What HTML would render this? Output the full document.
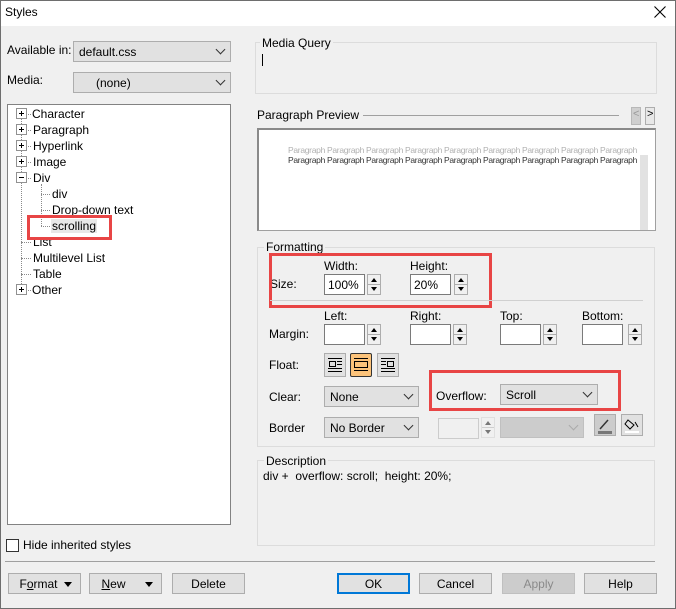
<!DOCTYPE html>
<html><head><meta charset="utf-8"><style>
*{box-sizing:border-box;margin:0;padding:0}
body{width:676px;height:609px;overflow:hidden;background:#f0f0f0;font-family:"Liberation Sans",sans-serif;font-size:12px;color:#000;position:relative}
.a{position:absolute;white-space:nowrap}
.win{position:absolute;left:0;top:0;width:676px;height:609px;border:1px solid #6e6e6e}
.title{position:absolute;left:1px;top:1px;width:674px;height:25px;background:#fff}
.combo{position:absolute;background:#e1e1e1;border:1px solid #adadad;height:21px;padding:3px 0 0 5px}
.combo .ch{position:absolute;right:6px;top:4px;width:7px;height:7px;border-right:1px solid #333;border-bottom:1px solid #333;transform:rotate(45deg)}
.inp{position:absolute;background:#fff;border:1px solid #7a7a7a;height:21px;padding:3px 0 0 3px}
.spin{position:absolute;width:14px;height:21px;border:1px solid #adadad;background:#f0f0f0}
.spin:before{content:"";position:absolute;left:3px;top:3px;border-left:3px solid transparent;border-right:3px solid transparent;border-bottom:4px solid #000}
.spin:after{content:"";position:absolute;left:3px;top:12px;border-left:3px solid transparent;border-right:3px solid transparent;border-top:4px solid #000}
.spin i{position:absolute;left:0;right:0;top:9px;border-top:1px solid #adadad}
.grp{position:absolute;border:1px solid #dcdcdc}
.glab{position:absolute;background:#f0f0f0;padding:0 2px}
.btn{position:absolute;height:21px;background:#e1e1e1;border:1px solid #adadad;text-align:center;padding-top:3px}
.red{position:absolute;border:3px solid #e84545}
.pb{position:absolute;width:11px;height:11px;border:1px solid #919191;background:#fff}
.pb:before{content:"";position:absolute;left:2px;top:4px;width:5px;height:1px;background:#000}
.pb.p:after{content:"";position:absolute;left:4px;top:2px;width:1px;height:5px;background:#000}
.dot{position:absolute;border-top:1px dotted #8a8a8a}
.vdot{position:absolute;border-left:1px dotted #8a8a8a}
.fb{position:absolute;width:22px;height:24px;border:1px solid #adadad;background:#e1e1e1}
.pv span{display:inline-block;width:39px;font-size:8.5px;letter-spacing:-0.3px}
</style></head><body>
<div class="win"></div>
<div class="title"></div>
<div class="a" style="left:5px;top:5px">Styles</div>
<svg class="a" style="left:654px;top:6px" width="12" height="12"><path d="M0.5 0.5L11.5 11.5M11.5 0.5L0.5 11.5" stroke="#000" stroke-width="1.1"/></svg>

<div class="a" style="left:7px;top:43px">Available in:</div>
<div class="combo" style="left:73px;top:41px;width:158px">default.css<div class="ch"></div></div>
<div class="a" style="left:7px;top:73px">Media:</div>
<div class="combo" style="left:73px;top:72px;width:158px;padding-left:22px">(none)<div class="ch"></div></div>

<div class="a" style="left:7px;top:104px;width:224px;height:421px;background:#fff;border:1px solid #828282"></div>
<div class="vdot" style="left:21px;top:114px;height:176px"></div>
<div class="vdot" style="left:41px;top:184px;height:42px"></div>
<div class="dot" style="left:21px;top:242px;width:10px"></div>
<div class="dot" style="left:21px;top:258px;width:10px"></div>
<div class="dot" style="left:21px;top:274px;width:10px"></div>
<div class="dot" style="left:41px;top:194px;width:9px"></div>
<div class="dot" style="left:41px;top:210px;width:9px"></div>
<div class="dot" style="left:41px;top:226px;width:9px"></div>
<div class="pb p" style="left:16px;top:108px"></div><div class="dot" style="left:28px;top:114px;width:3px"></div>
<div class="pb p" style="left:16px;top:124px"></div><div class="dot" style="left:28px;top:130px;width:3px"></div>
<div class="pb p" style="left:16px;top:140px"></div><div class="dot" style="left:28px;top:146px;width:3px"></div>
<div class="pb p" style="left:16px;top:156px"></div><div class="dot" style="left:28px;top:162px;width:3px"></div>
<div class="pb" style="left:16px;top:172px"></div><div class="dot" style="left:28px;top:178px;width:3px"></div>
<div class="pb p" style="left:16px;top:284px"></div><div class="dot" style="left:28px;top:290px;width:3px"></div>
<div class="a" style="left:32px;top:107px">Character</div>
<div class="a" style="left:33px;top:123px">Paragraph</div>
<div class="a" style="left:33px;top:139px">Hyperlink</div>
<div class="a" style="left:33px;top:155px">Image</div>
<div class="a" style="left:33px;top:171px">Div</div>
<div class="a" style="left:52px;top:187px">div</div>
<div class="a" style="left:52px;top:203px">Drop-down text</div>
<div class="a" style="left:51px;top:219px;background:#e8e8e8;padding:0 1px">scrolling</div>
<div class="a" style="left:33px;top:235px">List</div>
<div class="a" style="left:33px;top:251px">Multilevel List</div>
<div class="a" style="left:33px;top:267px">Table</div>
<div class="a" style="left:32px;top:283px">Other</div>
<div class="red" style="left:27px;top:215px;width:85px;height:25px"></div>

<div class="a" style="left:6px;top:539px;width:13px;height:13px;border:1px solid #333;background:#fff"></div>
<div class="a" style="left:23px;top:538px">Hide inherited styles</div>

<!-- Media query -->
<div class="grp" style="left:255px;top:42px;width:402px;height:52px"></div>
<div class="glab" style="left:260px;top:36px">Media Query</div>
<div class="a" style="left:262px;top:54px;width:1px;height:12px;background:#000"></div>

<!-- Preview -->
<div class="a" style="left:257px;top:108px">Paragraph Preview</div>
<div class="a" style="left:363px;top:115px;width:256px;height:1px;background:#a0a0a0"></div>
<div class="a" style="left:631px;top:107px;width:10px;height:18px;background:#cfcfcf;border:1px solid #b8b8b8;color:#999;font-size:11px;padding-left:1px">&lt;</div>
<div class="a" style="left:645px;top:107px;width:10px;height:18px;background:#e8e8e8;border:1px solid #adadad;font-size:11px;padding-left:1px">&gt;</div>
<div class="a" style="left:257px;top:128px;width:399px;height:103px;background:#fff;border:1px solid #a0a0a0;border-top:2px solid #8a8a8a;border-left:2px solid #8a8a8a"></div>
<div class="a" style="left:640px;top:155px;width:8px;height:75px;background:#e2e2e2"></div>
<div class="a pv" style="left:288px;top:145px;color:#b0b0b0;line-height:9px"><span>Paragraph</span><span>Paragraph</span><span>Paragraph</span><span>Paragraph</span><span>Paragraph</span><span>Paragraph</span><span>Paragraph</span><span>Paragraph</span><span>Paragraph</span></div>
<div class="a pv" style="left:288px;top:155px;color:#333;line-height:9px"><span>Paragraph</span><span>Paragraph</span><span>Paragraph</span><span>Paragraph</span><span>Paragraph</span><span>Paragraph</span><span>Paragraph</span><span>Paragraph</span><span>Paragraph</span></div>

<!-- Formatting -->
<div class="grp" style="left:257px;top:247px;width:398px;height:200px"></div>
<div class="glab" style="left:264px;top:240px">Formatting</div>
<div class="a" style="left:270px;top:277px">Size:</div>
<div class="a" style="left:324px;top:259px">Width:</div>
<div class="inp" style="left:324px;top:274px;width:41px">100%</div>
<div class="spin" style="left:367px;top:274px"><i></i></div>
<div class="a" style="left:410px;top:259px">Height:</div>
<div class="inp" style="left:410px;top:274px;width:41px">20%</div>
<div class="spin" style="left:454px;top:274px"><i></i></div>
<div class="red" style="left:269px;top:253px;width:223px;height:55px"></div>
<div class="a" style="left:270px;top:300px;width:373px;height:1px;background:#d0d0d0"></div>

<div class="a" style="left:324px;top:309px">Left:</div>
<div class="a" style="left:410px;top:309px">Right:</div>
<div class="a" style="left:500px;top:309px">Top:</div>
<div class="a" style="left:582px;top:309px">Bottom:</div>
<div class="a" style="left:269px;top:327px">Margin:</div>
<div class="inp" style="left:324px;top:324px;width:41px"></div><div class="spin" style="left:367px;top:324px"><i></i></div>
<div class="inp" style="left:410px;top:324px;width:41px"></div><div class="spin" style="left:453px;top:324px"><i></i></div>
<div class="inp" style="left:500px;top:324px;width:41px"></div><div class="spin" style="left:543px;top:324px"><i></i></div>
<div class="inp" style="left:582px;top:324px;width:41px"></div><div class="spin" style="left:628px;top:324px"><i></i></div>

<div class="a" style="left:269px;top:358px">Float:</div>
<div class="fb" style="left:324px;top:353px"><svg width="20" height="22"><g stroke="#000" fill="none"><rect x="4.5" y="7.5" width="6" height="5"/><path d="M3 4.5h14M12 7.5h5M12 10.5h5M3 14.5h14M3 17.5h14"/></g></svg></div>
<div class="fb" style="left:350px;top:353px;background:#fcc37a;border:1px solid #333;border-radius:2px"><svg width="20" height="22"><g stroke="#000" fill="none"><rect x="3.5" y="7.5" width="13" height="6"/><path d="M3 4.5h14M3 16.5h14"/></g></svg></div>
<div class="fb" style="left:377px;top:353px"><svg width="20" height="22"><g stroke="#000" fill="none"><rect x="9.5" y="7.5" width="6" height="5"/><path d="M3 4.5h14M3 7.5h5M3 10.5h5M3 14.5h14M3 17.5h14"/></g></svg></div>

<div class="a" style="left:269px;top:390px">Clear:</div>
<div class="combo" style="left:324px;top:386px;width:95px">None<div class="ch"></div></div>
<div class="a" style="left:436px;top:389px">Overflow:</div>
<div class="combo" style="left:500px;top:384px;width:98px">Scroll<div class="ch"></div></div>
<div class="red" style="left:429px;top:370px;width:192px;height:41px"></div>

<div class="a" style="left:269px;top:421px">Border</div>
<div class="combo" style="left:324px;top:417px;width:95px">No Border<div class="ch"></div></div>
<div class="a" style="left:438px;top:418px;width:41px;height:21px;background:#f0f0f0;border:1px solid #ccc"></div>
<div class="spin" style="left:481px;top:417px;border-color:#d0d0d0;opacity:.5"><i></i></div>
<div class="combo" style="left:500px;top:417px;width:84px;background:#cccccc;border-color:#c0c0c0"><div class="ch" style="border-color:#aaa"></div></div>
<div class="a" style="left:594px;top:414px;width:22px;height:22px;background:#cccccc;border:1px solid #adadad"><svg width="20" height="20"><path d="M5 14L13 5" stroke="#333" stroke-width="1.5"/><rect x="3" y="16" width="14" height="3" fill="#777"/></svg></div>
<div class="a" style="left:621px;top:414px;width:22px;height:22px;background:#e1e1e1;border:1px solid #adadad"><svg width="20" height="20"><path d="M6 5l6 5-4 4-5-5zM13 7l3 5" stroke="#000" fill="none"/><rect x="3" y="16" width="14" height="2" fill="#fff"/></svg></div>

<!-- Description -->
<div class="grp" style="left:257px;top:460px;width:398px;height:86px"></div>
<div class="glab" style="left:264px;top:454px">Description</div>
<div class="a" style="left:263px;top:469px">div +&nbsp; overflow: scroll;&nbsp; height: 20%;</div>

<div class="a" style="left:5px;top:561px;width:650px;height:1px;background:#a0a0a0"></div>
<div class="btn" style="left:8px;top:573px;width:73px;padding-right:12px">F<u>o</u>rmat<span style="position:absolute;right:8px;top:8px;border-left:4px solid transparent;border-right:4px solid transparent;border-top:5px solid #000"></span></div>
<div class="btn" style="left:89px;top:573px;width:73px;padding-right:24px"><u>N</u>ew<span style="position:absolute;right:8px;top:8px;border-left:4px solid transparent;border-right:4px solid transparent;border-top:5px solid #000"></span></div>
<div class="btn" style="left:172px;top:573px;width:73px">Delete</div>
<div class="btn" style="left:337px;top:573px;width:73px;border:2px solid #0078d7;padding-top:2px">OK</div>
<div class="btn" style="left:419px;top:573px;width:73px">Cancel</div>
<div class="btn" style="left:502px;top:573px;width:73px;background:#cccccc;border-color:#bfbfbf;color:#8a8a8a">Apply</div>
<div class="btn" style="left:584px;top:573px;width:73px">Help</div>
</body></html>
